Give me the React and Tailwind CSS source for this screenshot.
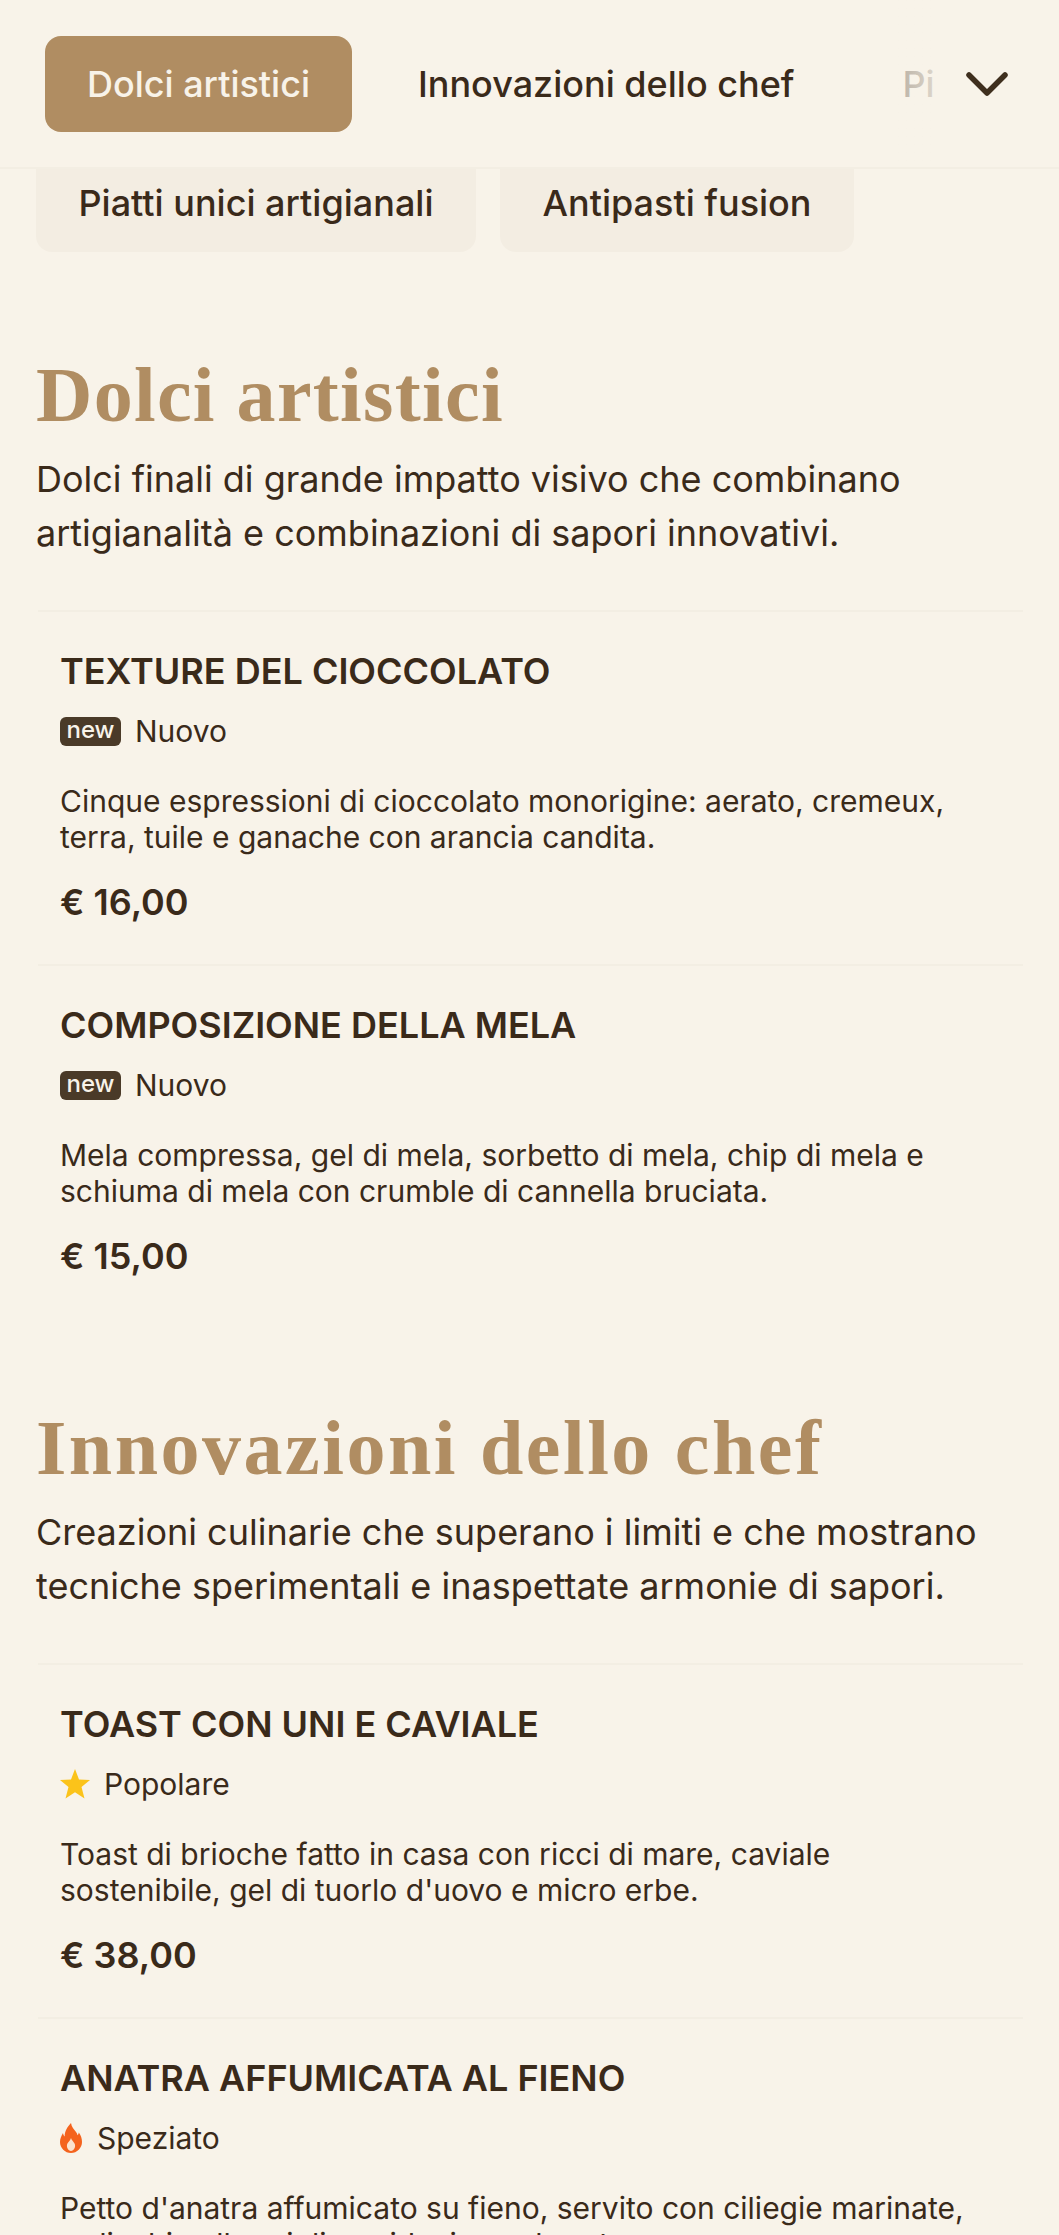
const bodyFont = "font-['Inter','Noto_Sans',sans-serif]";

function Flame() {
  return (
    <svg viewBox="0 0 22 30" className="h-[30px] w-[22px] shrink-0">
      <path fill="#f4631e" d="M11 0c.5 4 3 6.500 5 9 .8 1 1.300 2 1.500 3.200.8-.6 1.200-1.500 1.300-2.700C21 12.500 22 15.500 22 19c0 6-5 11-11 11S0 25 0 19c0-3.500 1.500-6.500 3-9 .2 1.500.7 2.700 1.700 3.500C4.500 8.500 7.500 3.500 11 0z" />
      <path fill="#fbe3cf" d="M11 15c.5 2 2.500 3.500 3.700 5.700 1.300 3-.9 7.300-3.700 7.300s-5-4.300-3.700-7.300C8.500 18.700 10.500 17.300 11 15z" />
    </svg>
  );
}

function StarIcon() {
  return (
    <svg viewBox="0 0 30 30" className="h-[30px] w-[30px] shrink-0">
      <polygon fill="#fbc31a" points="15,0 19,10.500 30,11 21.500,18 24.500,29.500 15,23.200 5.500,29.500 8.500,18 0,11 11,10.500" />
    </svg>
  );
}

function Tag({ kind }) {
  if (kind === 'new') {
    return (
      <div className="flex h-[30px] items-center gap-[14px]">
        <span className="flex h-[29px] w-[61px] items-center justify-center rounded-[6px] bg-[#4a3a28] pb-[3px] text-[24px] font-medium text-[#f8f3e9]">new</span>
        <span className="text-[30px] leading-[30px]">Nuovo</span>
      </div>
    );
  }
  if (kind === 'popular') {
    return (
      <div className="flex h-[30px] items-center gap-[14px]">
        <StarIcon />
        <span className="text-[30px] leading-[30px]">Popolare</span>
      </div>
    );
  }
  return (
    <div className="flex h-[30px] items-center gap-[15px]">
      <Flame />
      <span className="text-[30px] leading-[30px]">Speziato</span>
    </div>
  );
}

function Item({ name, tag, text, price }) {
  return (
    <div className="h-[354px] border-t-2 border-[#f3eee3] pt-[38px] pr-[40px] pl-[22px]">
      <h3 className="text-[36px] leading-[42px] font-semibold">{name}</h3>
      <div className="mt-[24px]"><Tag kind={tag} /></div>
      <p className="mt-[37px] text-[30px] leading-[36px]">{text}</p>
      <p className="mt-[25px] text-[36px] leading-[44px] font-semibold">{price}</p>
    </div>
  );
}

function Section({ title, titleClass, intro, items }) {
  return (
    <section>
      <h2 className={`font-['Liberation_Serif',serif] text-[78px] leading-[92px] font-bold text-[#b08d62] ${titleClass}`}>{title}</h2>
      <p className="mt-[11px] text-[36px] leading-[54px]">{intro}</p>
      <div className="mt-[50px] ml-[2px]">
        {items.map((item) => <Item key={item.name} {...item} />)}
      </div>
    </section>
  );
}

const sections = [
  {
    title: 'Dolci artistici',
    titleClass: 'tracking-[1.3px]',
    intro: 'Dolci finali di grande impatto visivo che combinano artigianalità e combinazioni di sapori innovativi.',
    items: [
      { name: 'TEXTURE DEL CIOCCOLATO', tag: 'new', text: 'Cinque espressioni di cioccolato monorigine: aerato, cremeux, terra, tuile e ganache con arancia candita.', price: '€ 16,00' },
      { name: 'COMPOSIZIONE DELLA MELA', tag: 'new', text: 'Mela compressa, gel di mela, sorbetto di mela, chip di mela e schiuma di mela con crumble di cannella bruciata.', price: '€ 15,00' },
    ],
  },
  {
    title: 'Innovazioni dello chef',
    titleClass: 'tracking-[2.5px]',
    intro: 'Creazioni culinarie che superano i limiti e che mostrano tecniche sperimentali e inaspettate armonie di sapori.',
    items: [
      { name: 'TOAST CON UNI E CAVIALE', tag: 'popular', text: "Toast di brioche fatto in casa con ricci di mare, caviale sostenibile, gel di tuorlo d'uovo e micro erbe.", price: '€ 38,00' },
      { name: 'ANATRA AFFUMICATA AL FIENO', tag: 'spicy', text: "Petto d'anatra affumicato su fieno, servito con ciliegie marinate, radicchio alla griglia e riduzione al porto.", price: '€ 36,00' },
    ],
  },
];

export default function App() {
  return (
    <div className={`h-[2235px] overflow-hidden bg-[#f8f3e9] text-[#3a2a1a] ${bodyFont}`}>
      <header className="relative flex h-[169px] items-center overflow-hidden border-b-2 border-[#f3eee3] pl-[45px]">
        <div className="flex items-center whitespace-nowrap text-[36px] font-medium">
          <span className="flex h-[96px] w-[307px] items-center justify-center rounded-[16px] bg-[#b08d62] text-[#f8f3e9]">Dolci artistici</span>
          <span className="ml-[66px]">Innovazioni dello chef</span>
          <span className="ml-[108px]">Piatti unici artigianali</span>
        </div>
        <div className="absolute inset-y-0 right-0 flex w-[125px] items-center bg-[#f8f3e9] pl-[32px]">
          <svg viewBox="0 0 42 24" className="h-[24px] w-[42px]" fill="none" stroke="#3f2f1e" strokeWidth="5.500" strokeLinecap="round" strokeLinejoin="round">
            <path d="M3 3l18 18L39 3" />
          </svg>
        </div>
        <div className="absolute inset-y-0 right-[125px] w-[40px] bg-gradient-to-r from-[#f8f3e9]/65 to-[#f8f3e9]/85" />
      </header>
      <div className="px-[36px]">
        <div className="flex gap-[24px] text-[36px] font-medium">
          <span className="flex h-[83px] w-[440px] items-center justify-center rounded-b-[16px] bg-[#f3ede2] pb-[15px]">Piatti unici artigianali</span>
          <span className="flex h-[83px] w-[354px] items-center justify-center rounded-b-[16px] bg-[#f3ede2] pb-[15px]">Antipasti fusion</span>
        </div>
        <div className="mt-[97px] flex flex-col gap-[84px]">
          {sections.map((section) => <Section key={section.title} {...section} />)}
        </div>
      </div>
    </div>
  );
}
